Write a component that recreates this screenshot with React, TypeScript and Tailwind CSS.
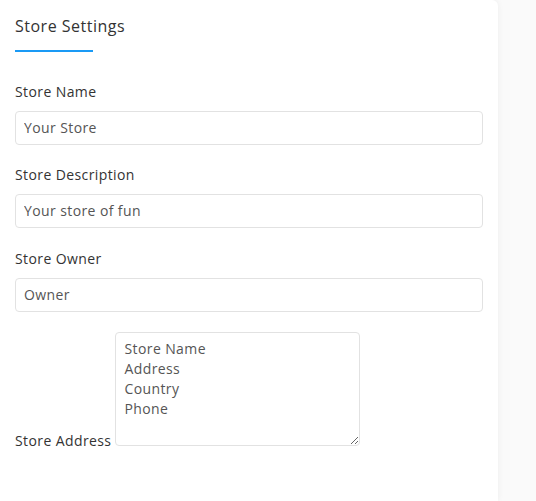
import React from "react";

const font = { fontFamily: '"Open Sans", "Liberation Sans", sans-serif' };

function Field({ label, value, mb }: { label: string; value: string; mb: string }) {
  return (
    <div className={mb}>
      <label className="block text-[14px] leading-[20px] text-[#333] mb-[9px] tracking-[0.4px]">{label}</label>
      <input
        readOnly
        value={value}
        className="block w-[468px] h-[34px] px-[8px] pb-[1px] border border-[#e2e2e2] rounded-[4px] text-[14px] text-[#555] bg-white outline-none tracking-[0.4px]"
      />
    </div>
  );
}

export default function App() {
  return (
    <div className="min-h-[501px] w-[536px] bg-[#fafafa] overflow-hidden" style={font}>
      <div className="w-[498px] min-h-[501px] bg-white rounded-tr-[6px] shadow-[0_0_6px_rgba(0,0,0,0.06)] pl-[15px] pt-[14px]">
        <h2 className="text-[16px] leading-[24px] text-[#333] font-normal tracking-[0.5px]">Store Settings</h2>
        <div className="w-[78px] h-[2px] bg-[#1a9af5] mt-[12px] mb-[30px]" />
        <Field label="Store Name" value="Your Store" mb="mb-[20px]" />
        <Field label="Store Description" value="Your store of fun" mb="mb-[21px]" />
        <Field label="Store Owner" value="Owner" mb="mb-[20px]" />
        <div className="text-[14px] leading-[20px] text-[#333] tracking-[0.4px]">
          <label>Store Address</label>{" "}
          <textarea
            readOnly
            value={"Store Name\nAddress\nCountry\nPhone"}
            className="w-[245px] h-[114px] px-[8px] pt-[6px] pb-[8px] border border-[#e2e2e2] rounded-[4px] text-[14px] leading-[20px] text-[#555] outline-none align-baseline tracking-[0.4px]"
          />
        </div>
      </div>
    </div>
  );
}
